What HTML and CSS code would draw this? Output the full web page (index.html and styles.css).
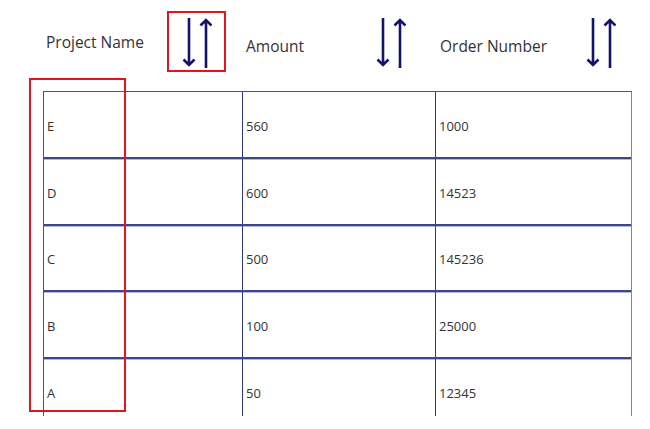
FILE: index.html
```html
<!DOCTYPE html>
<html>
<head>
<meta charset="utf-8">
<link rel="stylesheet" href="styles.css">
</head>
<body>
<div class="page">
  <div class="header">
    <div class="hcell hc1">
      <span class="label high">Project Name</span>
      <svg class="sort" viewBox="0 0 30 52" width="30" height="52"><path d="M7 1V48M1.5 42.5L7 48L12.5 42.5M24 51V3M18.5 8.5L24 3L29.5 8.5" fill="none" stroke="#13136b" stroke-width="2.6"/></svg>
    </div>
    <div class="hcell hc2">
      <span class="label low">Amount</span>
      <svg class="sort" viewBox="0 0 30 52" width="30" height="52"><path d="M7 1V48M1.5 42.5L7 48L12.5 42.5M24 51V3M18.5 8.5L24 3L29.5 8.5" fill="none" stroke="#13136b" stroke-width="2.6"/></svg>
    </div>
    <div class="hcell hc3">
      <span class="label low">Order Number</span>
      <svg class="sort" viewBox="0 0 30 52" width="30" height="52"><path d="M7 1V48M1.5 42.5L7 48L12.5 42.5M24 51V3M18.5 8.5L24 3L29.5 8.5" fill="none" stroke="#13136b" stroke-width="2.6"/></svg>
    </div>
  </div>
  <div class="table">
    <div class="row"><div class="cell">E</div><div class="cell">560</div><div class="cell">1000</div></div>
    <div class="row"><div class="cell">D</div><div class="cell">600</div><div class="cell">14523</div></div>
    <div class="row"><div class="cell">C</div><div class="cell">500</div><div class="cell">145236</div></div>
    <div class="row"><div class="cell">B</div><div class="cell">100</div><div class="cell">25000</div></div>
    <div class="row"><div class="cell">A</div><div class="cell">50</div><div class="cell">12345</div></div>
  </div>
  <div class="mark mark-sort"></div>
  <div class="mark mark-col"></div>
</div>
</body>
</html>
```

FILE: styles.css
```css
html, body {
  margin: 0;
  padding: 0;
  background: #ffffff;
}
body {
  font-family: "Open Sans", "Noto Sans", sans-serif;
  color: #333333;
  width: 650px;
  height: 429px;
  overflow: hidden;
}
.page {
  position: relative;
  width: 650px;
  height: 429px;
}
.header {
  display: grid;
  grid-template-columns: 199px 193px 197px;
  align-items: start;
  padding: 17px 0 0 43px;
  height: 91px;
  box-sizing: border-box;
}
.hcell {
  display: flex;
  align-items: center;
  height: 52px;
  padding-left: 3px;
}
.hc1 { padding-right: 30px; }
.hc2 { padding-right: 29px; padding-left: 4px; }
.hc3 { padding-right: 16px; padding-left: 5px; }
.label {
  font-size: 15.5px;
  color: #333333;
  white-space: nowrap;
}
.label.high {
  margin-top: -2px;
}
.label.low {
  margin-top: 6px;
}
.sort {
  margin-left: auto;
  display: block;
  flex: none;
}
.table {
  margin-left: 43px;
  width: 589px;
  height: 325px;
  overflow: hidden;
  border-top: 1px solid #46508f;
  border-left: 1px solid #46508f;
  border-right: 1px solid #7d83b5;
  box-sizing: border-box;
}
.row {
  display: grid;
  grid-template-columns: 199px 193px 1fr;
  height: 66.75px;
  box-sizing: border-box;
  border-bottom: 2px solid #3c468a;
  box-shadow: 0 1px 0 #b3b7d8;
}
.cell {
  display: flex;
  align-items: center;
  padding: 3px 0 0 3px;
  font-size: 13px;
  color: #333333;
  border-right: 1px solid #2f3a80;
}
.cell:last-child {
  border-right: none;
}
.mark {
  position: absolute;
  border: 2px solid #e5131b;
  box-sizing: border-box;
}
.mark-sort {
  left: 167px;
  top: 11px;
  width: 59px;
  height: 61px;
}
.mark-col {
  left: 29px;
  top: 78px;
  width: 97px;
  height: 334px;
}
```
